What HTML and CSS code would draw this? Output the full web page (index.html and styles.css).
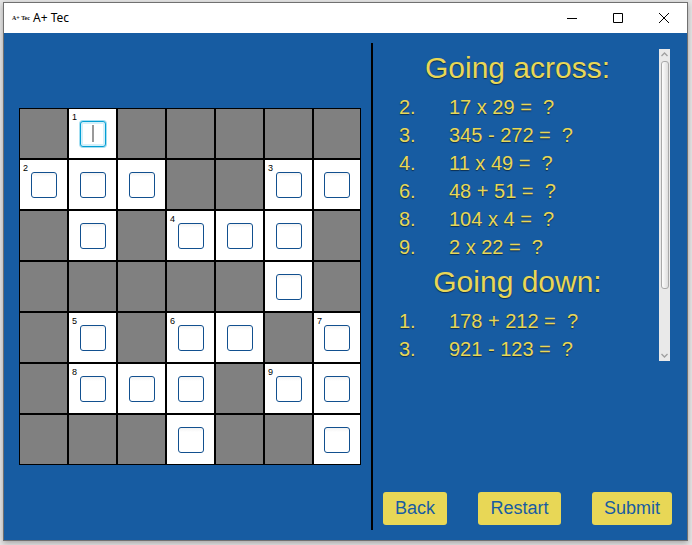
FILE: index.html
```html
<!DOCTYPE html>
<html lang="en">
<head>
<meta charset="utf-8">
<title>A+ Tec</title>
<link rel="stylesheet" href="styles.css">
</head>
<body>
<div class="window">
  <header class="titlebar">
    <span class="app-icon" aria-hidden="true">A+ Tec</span>
    <h1 class="title">A+ Tec</h1>
    <button class="win-btn" aria-label="Minimize"><svg width="10" height="10" viewBox="0 0 10 10"><path d="M0 5.5H10"/></svg></button>
    <button class="win-btn" aria-label="Maximize"><svg width="10" height="10" viewBox="0 0 10 10"><path d="M.5 .5H9.5V9.5H.5Z"/></svg></button>
    <button class="win-btn" aria-label="Close"><svg width="10" height="10" viewBox="0 0 10 10"><path d="M0 0L10 10M10 0L0 10"/></svg></button>
  </header>
  <main class="content">
    <section class="board-pane"><div class="board" id="board"></div></section>
    <section class="side">
      <div class="scroller">
        <div class="clues">
          <h2>Going across:</h2>
          <ul>
            <li><span>2.</span><span>17 x 29 =  ?</span></li>
            <li><span>3.</span><span>345 - 272 =  ?</span></li>
            <li><span>4.</span><span>11 x 49 =  ?</span></li>
            <li><span>6.</span><span>48 + 51 =  ?</span></li>
            <li><span>8.</span><span>104 x 4 =  ?</span></li>
            <li><span>9.</span><span>2 x 22 =  ?</span></li>
          </ul>
          <h2>Going down:</h2>
          <ul>
            <li><span>1.</span><span>178 + 212 =  ?</span></li>
            <li><span>3.</span><span>921 - 123 =  ?</span></li>
          </ul>
        </div>
        <div class="scrollbar" aria-hidden="true">
          <svg width="11" height="12" viewBox="0 0 11 12"><path d="M2.5 7L5.5 4L8.5 7"/></svg>
          <div class="track"><div class="thumb"></div></div>
          <svg width="11" height="12" viewBox="0 0 11 12"><path d="M2.5 5L5.5 8L8.5 5"/></svg>
        </div>
      </div>
      <div class="actions">
        <button class="action">Back</button>
        <button class="action">Restart</button>
        <button class="action">Submit</button>
      </div>
    </section>
  </main>
</div>
<script src="board.js"></script>
</body>
</html>
```
FILE: styles.css
```css
* { box-sizing: border-box; }

body {
  margin: 0;
  padding: 2px 4px 4px 3px;
  min-height: 100vh;
  display: flex;
  background: #e6e6e6;
  font-family: "Liberation Sans", Arial, sans-serif;
}

.window {
  flex: 1;
  display: flex;
  flex-direction: column;
  border: 1px solid #707070;
  background: #175ca2;
  box-shadow: 0 2px 6px rgba(0, 0, 0, 0.3);
}

.titlebar {
  display: flex;
  align-items: center;
  height: 30px;
  padding-left: 8px;
  background: #fff;
}

.app-icon {
  width: 17px;
  margin-right: 4px;
  font: bold 6px/16px "Liberation Sans Narrow", "Liberation Serif", serif;
  color: #111;
  text-align: center;
  white-space: nowrap;
}

.title {
  flex: 1;
  margin: 0;
  font: 12px/16px "Noto Sans", sans-serif;
  color: #000;
}

.win-btn {
  display: grid;
  place-items: center;
  width: 46px;
  height: 30px;
  padding: 0;
  border: 0;
  background: none;
}

.win-btn svg { fill: none; stroke: #000; stroke-width: 1; }

.content {
  flex: 1;
  display: flex;
  padding: 10px 15px 10px;
}

.board-pane {
  flex: 1;
  display: flex;
  align-items: center;
  padding-right: 10px;
}

.board {
  flex: 1;
  display: grid;
  grid-template-columns: repeat(6, 49px) 1fr;
  grid-auto-rows: 51px;
}

.cell {
  position: relative;
  display: grid;
  place-items: center;
  border: 1px solid #000;
  background: #808080;
}

.cell.open { background: #fff; }

.cell label {
  position: absolute;
  top: 3px;
  left: 3px;
  font-size: 9px;
  line-height: 10px;
  color: #000;
}

.cell input {
  width: 26px;
  height: 26px;
  padding: 0;
  border: 1px solid #12508f;
  border-radius: 3px;
  background: linear-gradient(#f2f2f2, #fff 4px);
  font-size: 16px;
  text-align: center;
  outline: 0;
}

.cell input.active {
  border-color: #039ed3;
  box-shadow: 0 0 0 1px #a5dff2, inset 0 0 0 2px #d3f0fa;
  background: linear-gradient(#999, #999) center / 2px 17px no-repeat #fff;
  caret-color: transparent;
}

.side {
  flex: 0 0 301px;
  display: flex;
  flex-direction: column;
  justify-content: space-between;
  padding-left: 10px;
  border-left: 2px solid #000;
}

.scroller {
  display: flex;
  height: 312px;
  margin: 6px 2px 0 0;
}

.clues {
  flex: 1;
  overflow: hidden;
  color: #e8d756;
  text-shadow: 0 1px 1px rgba(0, 0, 0, 0.5);
}

.clues h2 {
  margin: 0;
  padding-bottom: 6px;
  padding-right: 7px;
  font-size: 30px;
  line-height: 38px;
  font-weight: normal;
  text-align: center;
}

.clues ul {
  margin: 0 0 2px;
  padding: 0 0 0 16px;
  list-style: none;
}

.clues li {
  display: grid;
  grid-template-columns: 50px 1fr;
  font-size: 20px;
  line-height: 28px;
  white-space: pre;
}

.scrollbar {
  display: flex;
  flex-direction: column;
  width: 11px;
  background: #e9e9e9;
}

.scrollbar svg { fill: none; stroke: #a0a0a0; stroke-width: 1.4; }

.track { flex: 1; padding: 0 1px 0 2px; }

.thumb {
  height: 79%;
  border: 1px solid #a9a9a9;
  border-radius: 3px;
  background: linear-gradient(to right, #fdfdfd, #dedede);
}

.actions {
  display: flex;
  justify-content: space-between;
  margin-bottom: 5px;
}

.action {
  height: 33px;
  padding: 0 12px;
  border: 0;
  border-radius: 3px;
  background: #e8d756;
  color: #175ca2;
  font: 18px/33px "Liberation Sans", Arial, sans-serif;
}
```
FILE: board.js
```js
// "#" is a blocked cell, "." an open one, a digit an open cell that starts a clue.
const rows = [
  "#1#####",
  "2..##3.",
  "#.#4..#",
  "#####.#",
  "#5#6.#7",
  "#8..#9.",
  "###.##."
];
const board = document.getElementById("board");

rows.forEach((row, r) => {
  [...row].forEach((mark, c) => {
    const cell = document.createElement("div");
    cell.className = "cell";
    if (mark !== "#") {
      cell.classList.add("open");
      const input = document.createElement("input");
      input.id = `cell-${r}-${c}`;
      input.maxLength = 1;
      if (mark === "1") input.classList.add("active");
      if (mark === ".") {
        input.setAttribute("aria-label", `Row ${r + 1}, column ${c + 1}`);
      } else {
        const label = document.createElement("label");
        label.htmlFor = input.id;
        label.textContent = mark;
        cell.append(label);
      }
      cell.append(input);
    }
    board.append(cell);
  });
});
```
